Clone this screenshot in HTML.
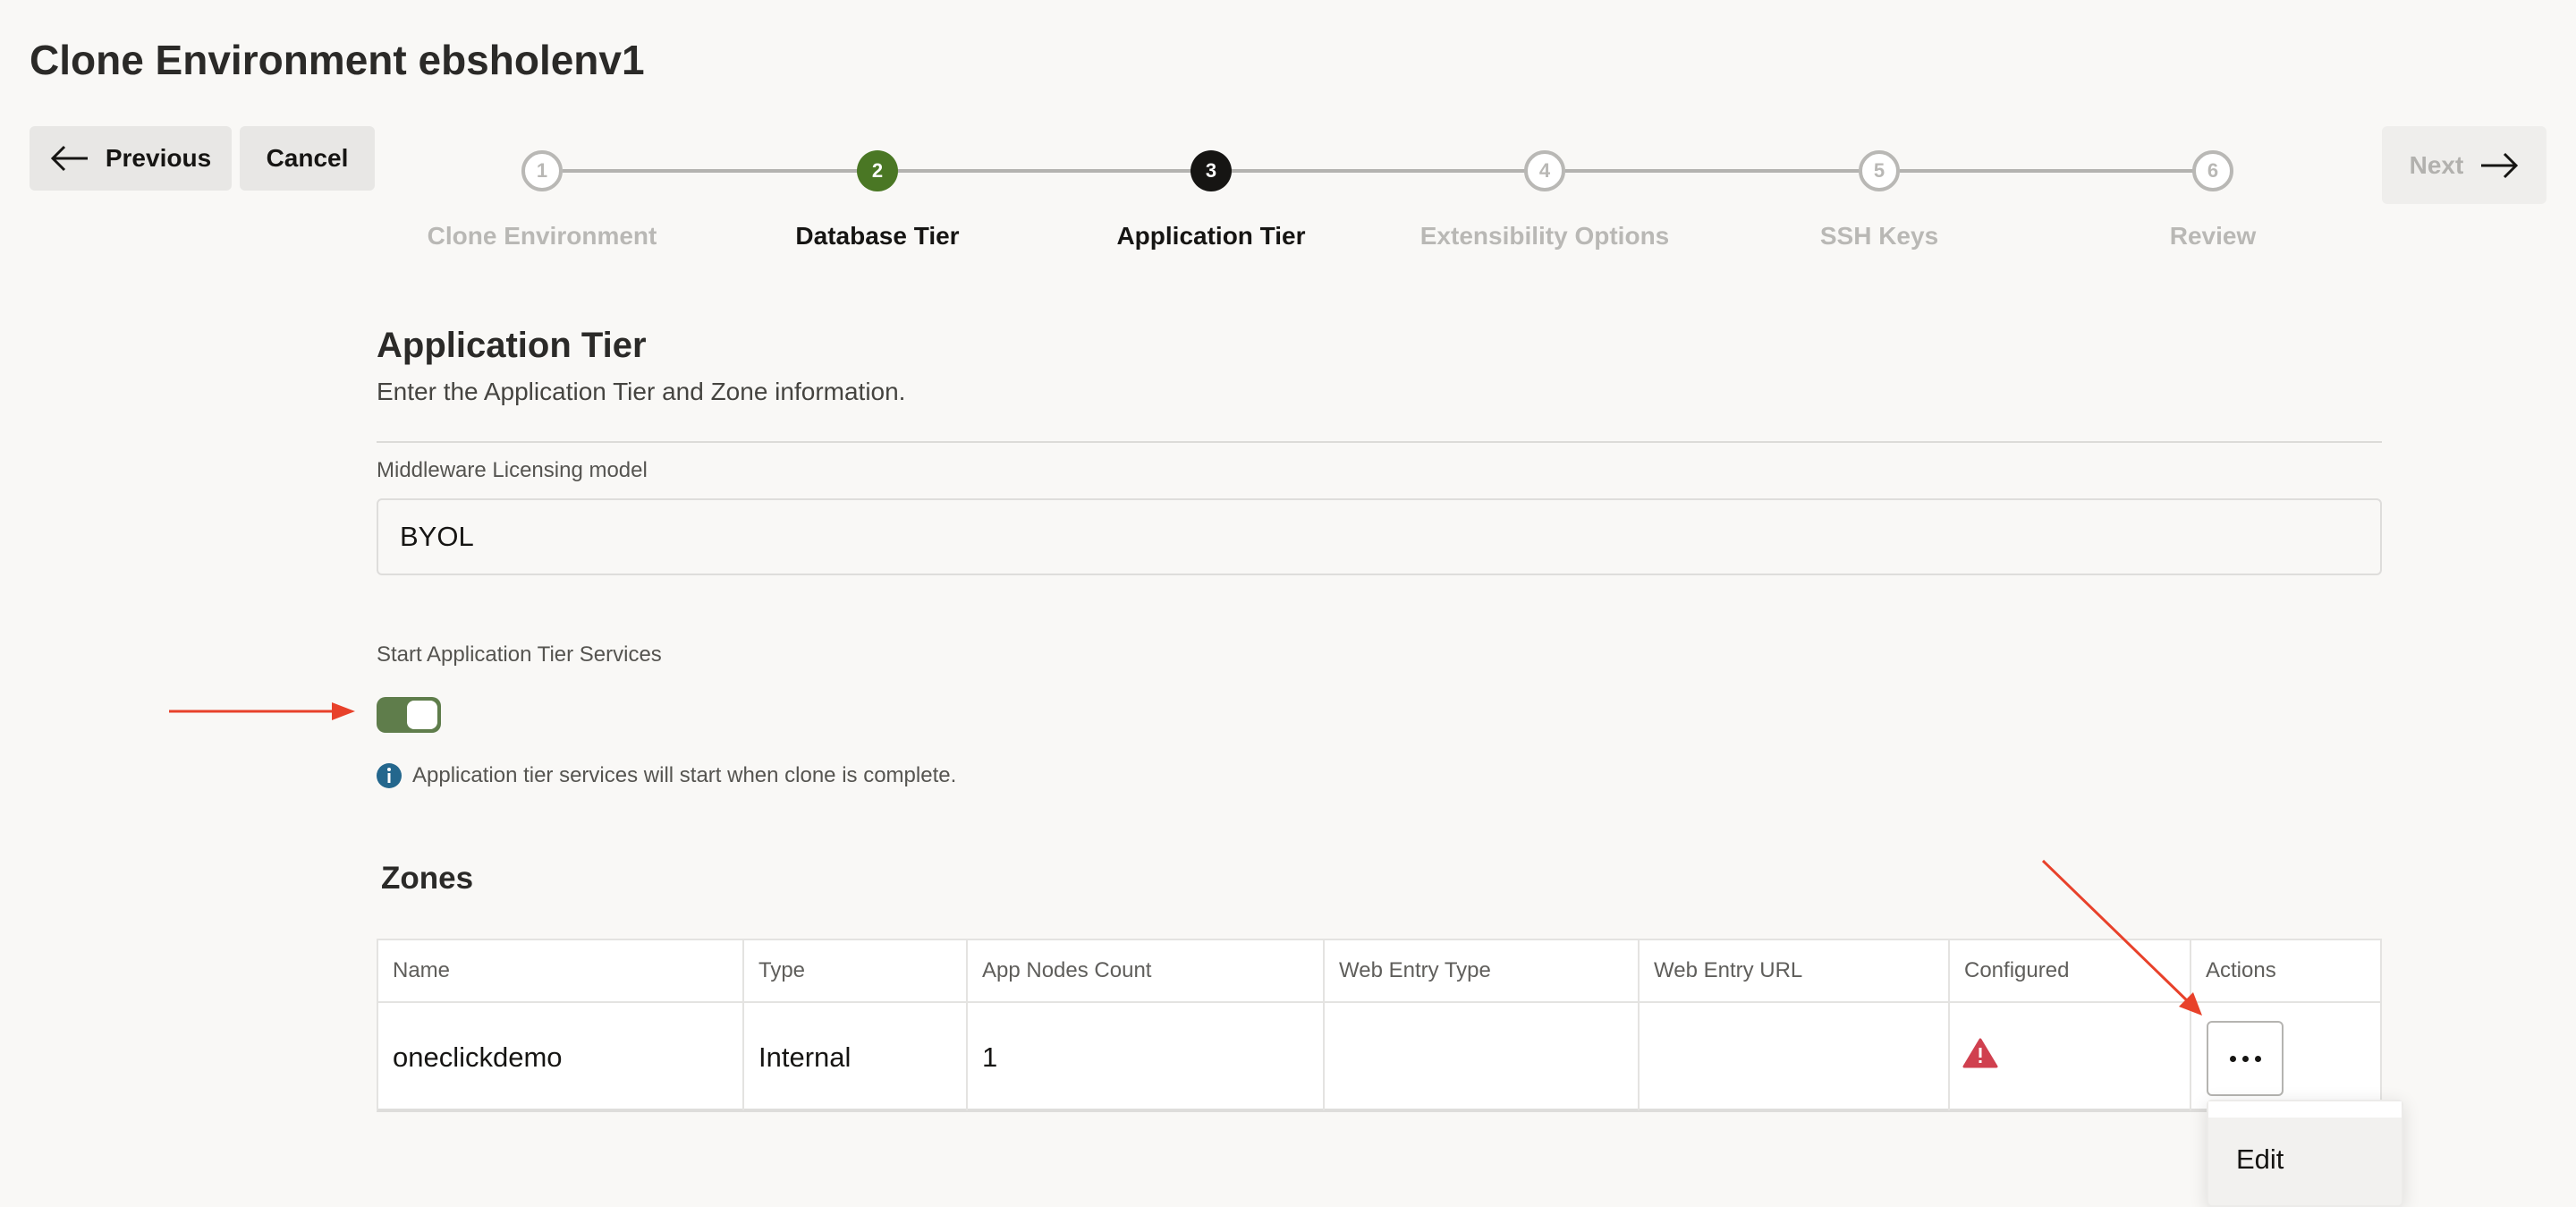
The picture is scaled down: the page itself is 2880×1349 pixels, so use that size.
<!DOCTYPE html>
<html><head><meta charset="utf-8"><style>
*{box-sizing:border-box;margin:0;padding:0}
body{width:2880px;height:1340px;background:#f9f8f6;font-family:"Liberation Sans",sans-serif;position:relative;overflow:hidden;color:#161513}
.a{position:absolute;white-space:nowrap}
.btn{position:absolute;background:#e8e7e5;border-radius:6px;font-size:28px;font-weight:bold;display:flex;align-items:center;justify-content:center}
.c{position:absolute;width:46px;height:46px;border-radius:50%;top:168px;font-size:22px;font-weight:bold;display:flex;align-items:center;justify-content:center}
.g{border:4px solid #b9b8b5;background:#fff;color:#b9b8b5}
.ln{position:absolute;height:4px;background:#b4b3b0;top:189px}
.lb{position:absolute;top:248px;font-size:28px;font-weight:bold;transform:translateX(-50%);white-space:nowrap}
.th{position:absolute;top:1049px;height:71px;font-size:24px;color:#5f5e5b;display:flex;align-items:center;padding-left:18px}
.td{position:absolute;top:1120px;height:123px;font-size:31px;display:flex;align-items:center;padding-left:18px}
</style></head><body>
<div class="a" style="left:33px;top:40px;font-size:46px;font-weight:bold;color:#2b2a28">Clone Environment ebsholenv1</div>
<div class="btn" style="left:33px;top:141px;width:226px;height:72px">
<svg width="44" height="30" viewBox="0 0 44 30" style="margin-right:18px"><path d="M42 15H4M16 2L3 15l13 13" fill="none" stroke="#161513" stroke-width="3"/></svg>Previous</div>
<div class="btn" style="left:268px;top:141px;width:151px;height:72px">Cancel</div>

<div class="ln" style="left:629px;width:330px"></div>
<div class="ln" style="left:1004px;width:328px"></div>
<div class="ln" style="left:1377px;width:328px"></div>
<div class="ln" style="left:1750px;width:328px"></div>
<div class="ln" style="left:2124px;width:328px"></div>
<div class="c g" style="left:583px">1</div>
<div class="c" style="left:958px;background:#4a7724;color:#fff">2</div>
<div class="c" style="left:1331px;background:#161513;color:#fff">3</div>
<div class="c g" style="left:1704px">4</div>
<div class="c g" style="left:2078px">5</div>
<div class="c g" style="left:2451px">6</div>
<div class="lb" style="left:606px;color:#b9b8b5">Clone Environment</div>
<div class="lb" style="left:981px">Database Tier</div>
<div class="lb" style="left:1354px">Application Tier</div>
<div class="lb" style="left:1727px;color:#b9b8b5">Extensibility Options</div>
<div class="lb" style="left:2101px;color:#b9b8b5">SSH Keys</div>
<div class="lb" style="left:2474px;color:#b9b8b5">Review</div>
<div class="btn" style="left:2663px;top:141px;width:184px;height:87px;background:#efeeec;color:#b2b1ae">Next
<svg width="44" height="30" viewBox="0 0 44 30" style="margin-left:18px"><path d="M2 15h38M28 2l13 13-13 13" fill="none" stroke="#161513" stroke-width="3"/></svg></div>

<div class="a" style="left:421px;top:364px;font-size:40px;font-weight:bold;color:#2b2a28">Application Tier</div>
<div class="a" style="left:421px;top:422px;font-size:28px;color:#454440">Enter the Application Tier and Zone information.</div>
<div class="a" style="left:421px;top:493px;width:2242px;height:2px;background:#dcdbd8"></div>
<div class="a" style="left:421px;top:512px;font-size:24px;color:#555450">Middleware Licensing model</div>
<div class="a" style="left:421px;top:557px;width:2242px;height:86px;border:2px solid #dedddb;border-radius:6px;background:#f9f8f6;font-size:31px;padding-left:24px;display:flex;align-items:center">BYOL</div>
<div class="a" style="left:421px;top:718px;font-size:24px;color:#555450">Start Application Tier Services</div>
<div class="a" style="left:421px;top:779px;width:72px;height:40px;border-radius:10px;background:#5f7d4b"></div>
<div class="a" style="left:455px;top:783px;width:34px;height:32px;border-radius:8px;background:#fff"></div>
<svg class="a" style="left:185px;top:780px" width="215" height="30"><path d="M4 15H190" stroke="#e8412a" stroke-width="3"/><path d="M212 15L186 5v20z" fill="#e8412a"/></svg>
<svg class="a" style="left:420px;top:852px" width="30" height="30"><circle cx="15" cy="15" r="14" fill="#24678d"/><rect x="13.5" y="12" width="3" height="11" fill="#fff"/><circle cx="15" cy="8" r="2" fill="#fff"/></svg>
<div class="a" style="left:461px;top:853px;font-size:24px;color:#555450">Application tier services will start when clone is complete.</div>
<div class="a" style="left:426px;top:962px;font-size:35px;font-weight:bold;color:#2b2a28">Zones</div>

<div class="a" style="left:421px;top:1049px;width:2242px;height:194px;background:#fff;border:2px solid #e4e3e1;border-bottom:4px solid #dedddb"></div>
<div class="a" style="left:421px;top:1119px;width:2242px;height:2px;background:#e4e3e1"></div>
<div class="a" style="left:830px;top:1049px;width:2px;height:192px;background:#e4e3e1"></div>
<div class="a" style="left:1080px;top:1049px;width:2px;height:192px;background:#e4e3e1"></div>
<div class="a" style="left:1479px;top:1049px;width:2px;height:192px;background:#e4e3e1"></div>
<div class="a" style="left:1831px;top:1049px;width:2px;height:192px;background:#e4e3e1"></div>
<div class="a" style="left:2178px;top:1049px;width:2px;height:192px;background:#e4e3e1"></div>
<div class="a" style="left:2448px;top:1049px;width:2px;height:192px;background:#e4e3e1"></div>
<div class="th" style="left:421px">Name</div>
<div class="th" style="left:830px">Type</div>
<div class="th" style="left:1080px">App Nodes Count</div>
<div class="th" style="left:1479px">Web Entry Type</div>
<div class="th" style="left:1831px">Web Entry URL</div>
<div class="th" style="left:2178px">Configured</div>
<div class="th" style="left:2448px">Actions</div>
<div class="td" style="left:421px">oneclickdemo</div>
<div class="td" style="left:830px">Internal</div>
<div class="td" style="left:1080px">1</div>
<svg class="a" style="left:2194px;top:1159px" width="40" height="36"><path d="M20 3L38 33H2z" fill="#d0404f" stroke="#d0404f" stroke-width="3" stroke-linejoin="round"/><rect x="18.5" y="12" width="3" height="11" fill="#fff"/><rect x="18.5" y="26" width="3" height="3" fill="#fff"/></svg>
<div class="a" style="left:2467px;top:1141px;width:86px;height:84px;border:2px solid #b5b4b1;border-radius:6px;background:#fff"></div>
<div class="a" style="left:2493px;top:1180px;width:7px;height:7px;border-radius:50%;background:#161513"></div>
<div class="a" style="left:2507px;top:1180px;width:7px;height:7px;border-radius:50%;background:#161513"></div>
<div class="a" style="left:2521px;top:1180px;width:7px;height:7px;border-radius:50%;background:#161513"></div>
<div class="a" style="left:2467px;top:1229px;width:220px;height:120px;background:#f2f1ef;border:2px solid #ecebe9;border-radius:6px;box-shadow:0 4px 20px rgba(0,0,0,.12)"></div>
<div class="a" style="left:2469px;top:1231px;width:216px;height:18px;background:#fff"></div>
<div class="a" style="left:2500px;top:1278px;font-size:31px">Edit</div>
<svg class="a" style="left:2270px;top:955px" width="200" height="190"><path d="M14 7L180 168" stroke="#e8412a" stroke-width="3"/><path d="M192 180L166 170 182 154z" fill="#e8412a"/></svg>
</body></html>
